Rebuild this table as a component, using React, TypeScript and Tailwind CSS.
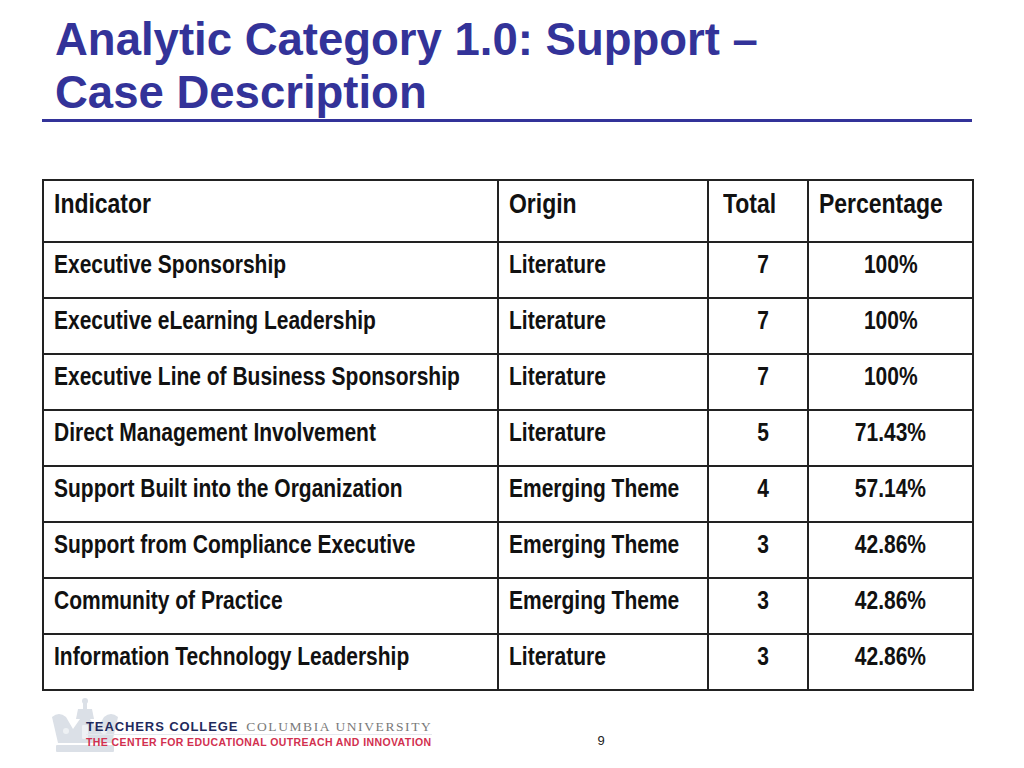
const rows = [
  { indicator: "Executive Sponsorship", origin: "Literature", total: "7", pct: "100%" },
  { indicator: "Executive eLearning Leadership", origin: "Literature", total: "7", pct: "100%" },
  { indicator: "Executive Line of Business Sponsorship", origin: "Literature", total: "7", pct: "100%" },
  { indicator: "Direct Management Involvement", origin: "Literature", total: "5", pct: "71.43%" },
  { indicator: "Support Built into the Organization", origin: "Emerging Theme", total: "4", pct: "57.14%" },
  { indicator: "Support from Compliance Executive", origin: "Emerging Theme", total: "3", pct: "42.86%" },
  { indicator: "Community of Practice", origin: "Emerging Theme", total: "3", pct: "42.86%" },
  { indicator: "Information Technology Leadership", origin: "Literature", total: "3", pct: "42.86%" },
];

// no narrow face installed, so squeeze Liberation Sans like Arial Narrow
function Narrow({ children, center }: { children: React.ReactNode; center?: boolean }) {
  return (
    <span
      className={
        center
          ? "inline-block whitespace-nowrap origin-center scale-x-[0.82]"
          : "inline-block whitespace-nowrap origin-left scale-x-[0.82]"
      }
    >
      {children}
    </span>
  );
}

function Crown() {
  return (
    <svg width="72" height="58" viewBox="0 0 72 58" className="shrink-0">
      <g fill="#dbe0e7">
        <circle cx="36" cy="4" r="3" />
        <rect x="34" y="3" width="4" height="10" />
        <path d="M29 12 h14 l2 10 h-18 z" />
        <path d="M3 20 q7 -6 14 0 l7 12 l7 -10 h10 l7 10 l7 -12 q7 -6 14 0 l-6 26 h-54 z" />
        <rect x="7" y="48" width="58" height="7" rx="1" />
      </g>
      <g fill="#eef1f4">
        <circle cx="17" cy="34" r="3" />
        <circle cx="55" cy="34" r="3" />
        <rect x="33" y="28" width="6" height="14" rx="1" />
      </g>
    </svg>
  );
}

const cell = "border-2 border-[#222] align-top pt-[6px] overflow-visible";

export default function App() {
  return (
    <div className="w-[1024px] h-[768px] bg-white relative overflow-hidden font-['Liberation_Sans',Arial,sans-serif]">
      <div className="pl-[55px] pt-[13px]">
        <h1 className="text-[45.5px] leading-[53px] font-bold text-[#333399]">
          Analytic Category 1.0: Support –<br />
          Case Description
        </h1>
      </div>
      <div className="ml-[42px] w-[930px] h-[3px] bg-[#333399]" />

      <table className="ml-[42px] mt-[57px] w-[930px] table-fixed border-collapse font-bold text-[#111]">
        <colgroup>
          <col className="w-[455px]" />
          <col className="w-[210px]" />
          <col className="w-[100px]" />
          <col className="w-[165px]" />
        </colgroup>
        <thead>
          <tr className="h-[62px] text-[28px] leading-[34px]">
            <th className={`${cell} text-left font-bold px-[10px]`}><Narrow>Indicator</Narrow></th>
            <th className={`${cell} text-left font-bold px-[10px]`}><Narrow>Origin</Narrow></th>
            <th className={`${cell} text-left font-bold px-[14px]`}><Narrow>Total</Narrow></th>
            <th className={`${cell} text-left font-bold px-[10px]`}><Narrow>Percentage</Narrow></th>
          </tr>
        </thead>
        <tbody>
          {rows.map((r) => (
            <tr key={r.indicator} className="h-[56px] text-[25.6px] leading-[31px]">
              <td className={`${cell} px-[10px]`}><Narrow>{r.indicator}</Narrow></td>
              <td className={`${cell} px-[10px]`}><Narrow>{r.origin}</Narrow></td>
              <td className={`${cell} text-center pl-[20px] pr-[10px]`}><Narrow center>{r.total}</Narrow></td>
              <td className={`${cell} text-center px-[10px]`}><Narrow center>{r.pct}</Narrow></td>
            </tr>
          ))}
        </tbody>
      </table>

      <div className="flex items-end mt-[6px] ml-[49px]">
        <Crown />
        <div className="-ml-[35px] mb-[7px] flex flex-col">
          <div className="flex items-baseline gap-[8px] leading-[14px] border-b border-[#e6e9ee]">
            <span className="text-[13px] font-bold tracking-[0.9px] text-[#1f2a5c]">TEACHERS COLLEGE</span>
            <span className="font-['Liberation_Serif',serif] text-[13.5px] tracking-[1.6px] text-[#7a7a7a]">COLUMBIA UNIVERSITY</span>
          </div>
          <span className="mt-[1px] text-[10.5px] leading-[12px] font-bold tracking-[0.4px] text-[#d2304f]">
            THE CENTER FOR EDUCATIONAL OUTREACH AND INNOVATION
          </span>
        </div>
        <span className="ml-[165px] mb-[5px] text-[13px] text-[#222]">9</span>
      </div>
    </div>
  );
}
